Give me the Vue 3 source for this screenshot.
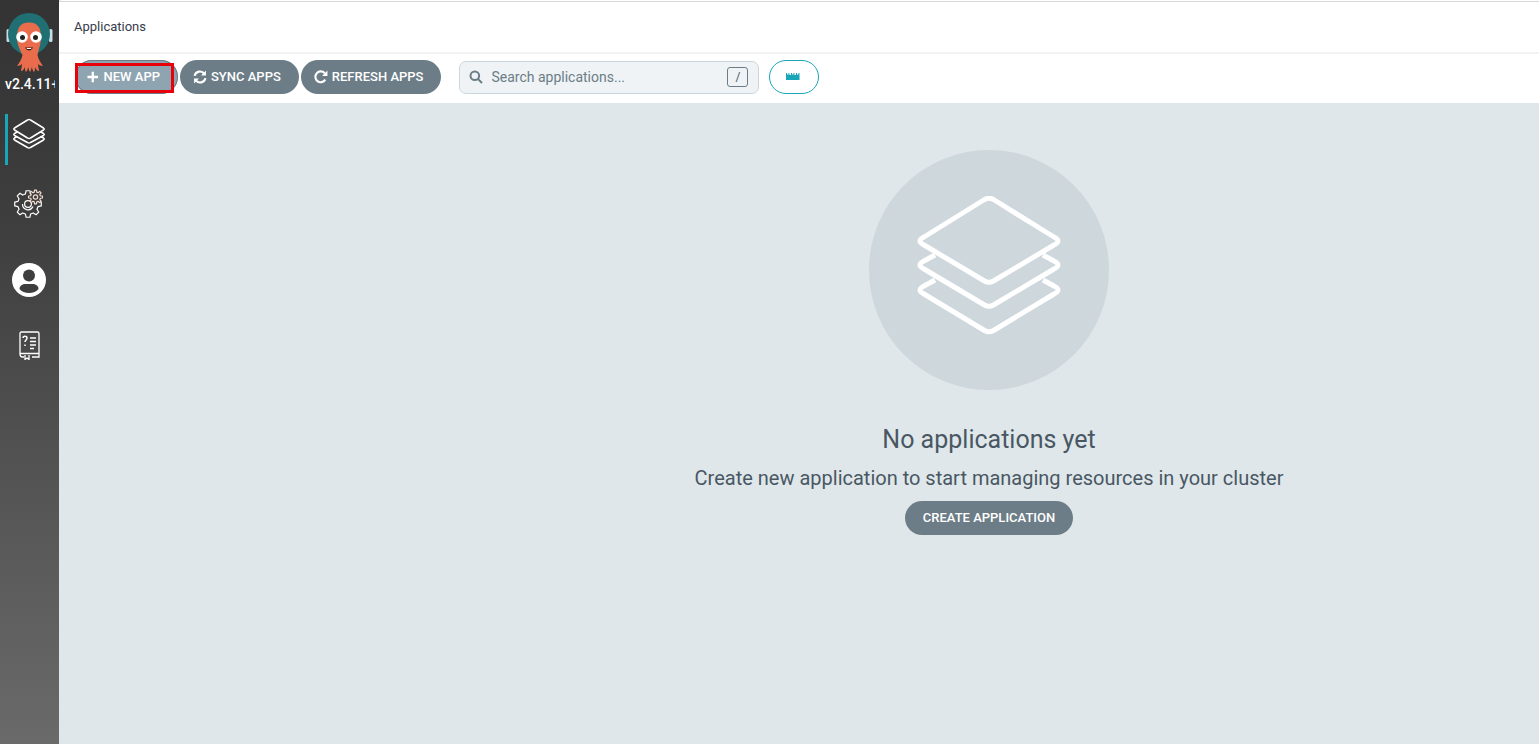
<template>
  <div class="page">
    <aside class="sidebar">
      <div class="logo">
        <svg width="50" height="62" viewBox="0 0 50 62">
          <rect x="2.500" y="18" width="3.500" height="13" rx="1.500" fill="#c9dbe4" />
          <rect x="45" y="18" width="3.500" height="13" rx="1.500" fill="#c9dbe4" />
          <circle cx="25" cy="23" r="21" fill="#1f6f73" />
          <path d="M13 26C13 16 17 11.500 25 11.500S37 16 37 26c0 7-2 11-3.500 18 1 5 3.500 8 5.500 11-2 0-4-1-5-2 0 3 1 5 1 7-2 0-3-2-4-4 0 2 0 4-1 5-1-1-2-3-2-5-1 2-1 4-2 5-1-1-1-3-2-5 0 2-1 4-2 5-1-1-1-3-1-5-1 2-2 4-4 4 0-2 1-4 1-7-1 1-3 2-5 2 2-3 4.500-6 5.500-11C15 37 13 33 13 26z" fill="#e96d4c" />
          <circle cx="18" cy="26" r="5.800" fill="#fff" />
          <circle cx="32" cy="26" r="5.800" fill="#fff" />
          <circle cx="18.500" cy="26.500" r="2.500" fill="#222" />
          <circle cx="31.500" cy="26.500" r="2.500" fill="#222" />
          <path d="M21 36.500c2 4 6 4 8 0z" fill="#3a1c14" />
          <path d="M22.500 37h5l-.5 1h-4z" fill="#fff" />
        </svg>
        <div class="version">v2.4.11+</div>
      </div>
      <nav class="nav">
        <a class="nav-item active">
          <svg width="34" height="32" viewBox="0 0 34 32" fill="none" stroke="#fff" stroke-width="1.500" stroke-linejoin="round">
            <path d="M15.500 2Q17 1 18.500 2L31.500 10Q33 11 31.500 12L18.500 20Q17 21 15.500 20L2.500 12Q1 11 2.500 10z" />
            <path d="M5.500 13.800 2.500 15.500Q1 16.500 2.500 17.500L15.500 24.500Q17 25.500 18.500 24.500L31.500 17.500Q33 16.500 31.500 15.500L28.500 13.800" />
            <path d="M5.500 18.300 2.500 20Q1 21 2.500 22L15.500 29.500Q17 30.500 18.500 29.500L31.500 22Q33 21 31.500 20L28.500 18.300" />
          </svg>
        </a>
        <a class="nav-item">
          <svg width="30" height="30" viewBox="0 0 30 30" fill="none" stroke="#fff" stroke-width="1.200" stroke-linejoin="round">
            <path :d="gearBig" />
            <circle cx="14" cy="15" r="3.400" />
            <path d="M8.500 15A5.500 5.500 0 0 0 19 17.500" />
            <path :d="gearSmall" stroke="#f3dccf" fill="#3e3e3e" />
            <circle cx="21.500" cy="8" r="2.200" stroke="#f3dccf" />
          </svg>
        </a>
        <a class="nav-item">
          <svg width="34" height="34" viewBox="0 0 34 34">
            <circle cx="17" cy="17" r="17" fill="#fff" />
            <circle cx="17" cy="12.500" r="6" fill="#3e3e3e" />
            <path d="M7.500 26c0-3.500 3-5 6-5h7c3 0 6 1.500 6 5-2 2.500-5.500 4-9.500 4s-7.500-1.500-9.500-4z" fill="#3e3e3e" />
          </svg>
        </a>
        <a class="nav-item">
          <svg width="24" height="30" viewBox="0 0 24 30" fill="none" stroke="#fff" stroke-width="1.300">
            <path d="M3 24V3.500Q3 2 4.500 2h16Q22 2 22 3.500V27h-7" />
            <path d="M3 24Q3 27 5.500 27H7M3 23.500h19" />
            <path d="M8 25v4.500l2-1.500 2 1.500V25" />
            <path d="M13 8h6M13 11.500h6M13 15h6M13 18.500h4" />
            <path d="M6 8c0-2.500 4-2.500 4 0 0 2-2 2-2 4M8 14.500v1.500" stroke-width="1.500" />
          </svg>
        </a>
      </nav>
    </aside>

    <main class="main">
      <header class="top-bar">Applications</header>
      <div class="toolbar">
        <div class="actions">
          <div class="new-app-wrap">
            <button class="btn btn-new">
              <svg width="12" height="12" viewBox="0 0 12 12"><path d="M6 .5v11M.5 6h11" stroke="#fff" stroke-width="2.400" /></svg>
              NEW APP
            </button>
            <span class="callout"></span>
          </div>
          <button class="btn">
            <svg width="14" height="14" viewBox="0 0 13 13" fill="none" stroke="#fff" stroke-width="2">
              <path d="M1.500 5.500A5 5 0 0 1 10.500 3.500" />
              <path d="M11.500 7.500A5 5 0 0 1 2.500 9.500" />
              <path d="M12 .5v4.500H7.500z" fill="#fff" stroke="none" />
              <path d="M1 12.500V8h4.500z" fill="#fff" stroke="none" />
            </svg>
            SYNC APPS
          </button>
          <button class="btn">
            <svg width="14" height="14" viewBox="0 0 13 13" fill="none" stroke="#fff" stroke-width="2">
              <path d="M10.500 9A5 5 0 1 1 10 3" />
              <path d="M12.500 .5V5.500H7.500z" fill="#fff" stroke="none" />
            </svg>
            REFRESH APPS
          </button>
        </div>
        <div class="search">
          <svg width="14" height="14" viewBox="0 0 14 14" fill="none" stroke="#6c7d87" stroke-width="2">
            <circle cx="5.800" cy="5.800" r="4.300" />
            <path d="M9 9l4 4" />
          </svg>
          <span class="placeholder">Search applications...</span>
          <span class="key">/</span>
        </div>
        <button class="view-btn">
          <svg width="16" height="7" viewBox="0 0 16 7">
            <path d="M0 0h1v1.500h1.500V0h1v2h1.500V0h1v1.500h1.500V0h1v2h1.500V0h1v1.500h1.500V0h1v7H0z" fill="#18a6b8" />
          </svg>
        </button>
      </div>

      <section class="content">
        <div class="empty-circle">
          <svg width="148" height="148" viewBox="0 -1 148 148" fill="none" stroke="#fff" stroke-width="5" stroke-linejoin="round">
            <path d="M69.500 2.500Q74 0 78.500 2.500L139 40Q147 44 139 48L78.500 84Q74 86.500 69.500 84L9 48Q1 44 9 40z" />
            <path d="M20 58 9 64Q1 68 9 72L69.500 108Q74 110.500 78.500 108L139 72Q147 68 139 64L128 58" />
            <path d="M20 83 9 89Q1 93 9 97L69.500 133.500Q74 136 78.500 133.500L139 97Q147 93 139 89L128 83" />
          </svg>
        </div>
        <h2 class="empty-title">No applications yet</h2>
        <p class="empty-text">Create new application to start managing resources in your cluster</p>
        <button class="btn btn-create">CREATE APPLICATION</button>
      </section>
    </main>
  </div>
</template>

<script setup>
function gear(cx, cy, outer, inner, teeth) {
  const step = (Math.PI * 2) / teeth
  let d = ''
  for (let i = 0; i < teeth; i++) {
    const a = i * step
    const pts = [
      [inner, a - step * 0.32],
      [outer, a - step * 0.18],
      [outer, a + step * 0.18],
      [inner, a + step * 0.32],
    ]
    for (const [r, t] of pts) {
      const x = (cx + r * Math.cos(t)).toFixed(2)
      const y = (cy + r * Math.sin(t)).toFixed(2)
      d += (d ? 'L' : 'M') + x + ' ' + y
    }
  }
  return d + 'z'
}

const gearBig = gear(14, 15, 13.4, 10.4, 8)
const gearSmall = gear(21.5, 8, 7, 5, 8)
</script>

<style scoped>
.page {
  display: flex;
  height: 744px;
  overflow: hidden;
  font-family: Roboto, "Liberation Sans", sans-serif;
}
.sidebar {
  width: 59px;
  flex: none;
  background: linear-gradient(180deg, #333 0%, #3e3e3e 30%, #6a6a6a 100%);
  box-shadow: 1px 0 2px rgba(0, 0, 0, 0.25);
  overflow: hidden;
}
.logo {
  padding: 11px 0 0 4px;
  height: 103px;
  box-sizing: border-box;
}
.logo svg {
  display: block;
}
.version {
  width: 50px;
  padding-left: 1px;
  color: #fff;
  font-size: 14px;
  font-weight: 500;
  line-height: 18px;
  margin-top: 2px;
  white-space: nowrap;
  overflow: hidden;
}
.nav {
  display: flex;
  flex-direction: column;
  padding-top: 11px;
}
.nav-item {
  height: 40px;
  display: flex;
  align-items: center;
  justify-content: center;
  border-left: 3px solid transparent;
  margin-left: 5px;
  margin-right: 10px;
}
.nav-item.active {
  height: 51px;
  box-sizing: border-box;
  padding-bottom: 12px;
  border-left-color: #18a6b8;
}
.nav-item:nth-child(2) {
  margin-top: 19px;
}
.nav-item:nth-child(3) {
  margin-top: 36px;
}
.nav-item:nth-child(4) {
  margin-top: 25px;
}
.main {
  flex: 1;
  min-width: 0;
  display: flex;
  flex-direction: column;
  background: #fff;
  border-top: 1px solid #d8d8d8;
  margin-top: 1px;
}
.top-bar {
  height: 52px;
  flex: none;
  box-sizing: border-box;
  padding: 0 0 2px 15px;
  display: flex;
  align-items: center;
  font-size: 13px;
  color: #363c4a;
  border-bottom: 2px solid #f1f3f4;
}
.toolbar {
  height: 49px;
  flex: none;
  box-sizing: border-box;
  display: flex;
  align-items: center;
  padding: 0 0 3px 16px;
  box-shadow: 0 1px 1px rgba(0, 0, 0, 0.05);
}
.actions {
  display: flex;
  gap: 2px;
}
.btn {
  height: 34px;
  padding: 0 18px 1px 13px;
  border: 0;
  border-radius: 17px;
  background: #6c7d87;
  color: #fff;
  font-family: inherit;
  font-size: 13px;
  font-weight: 500;
  display: inline-flex;
  align-items: center;
  gap: 4px;
  white-space: nowrap;
}
.new-app-wrap {
  position: relative;
}
.btn-new {
  background: #8fa4b1;
  box-shadow: inset 0 0 0 1px #6c7d87;
  width: 103px;
  padding-left: 12px;
  gap: 5px;
}
.callout {
  position: absolute;
  left: 0;
  top: 3px;
  width: 99px;
  height: 30px;
  box-sizing: border-box;
  border: 3px solid #e8000b;
}
.search {
  width: 300px;
  height: 33px;
  box-sizing: border-box;
  margin-left: 18px;
  padding: 0 10px 1px 9px;
  display: flex;
  align-items: center;
  gap: 8px;
  background: #eff3f5;
  border: 1px solid #ccd6dc;
  border-radius: 7px;
}
.placeholder {
  flex: 1;
  font-size: 14px;
  color: #6c7d87;
}
.key {
  width: 21px;
  height: 20px;
  box-sizing: border-box;
  border: 1px solid #6c7d87;
  border-radius: 3px;
  font-size: 12px;
  color: #495763;
  display: flex;
  align-items: center;
  justify-content: center;
}
.view-btn {
  width: 50px;
  height: 34px;
  margin-left: 10px;
  border: 1px solid #18a6b8;
  border-radius: 17px;
  background: #fff;
  display: flex;
  align-items: center;
  justify-content: center;
  padding: 0 0 2px;
}
.content {
  flex: 1;
  background: #dfe7ea;
  display: flex;
  flex-direction: column;
  align-items: center;
  padding: 47px 0 0 380px;
}
.empty-circle {
  width: 240px;
  height: 240px;
  border-radius: 50%;
  background: #cdd7dc;
  display: flex;
  align-items: center;
  justify-content: center;
  flex: none;
}
.empty-title {
  margin: 35px 0 0;
  font-size: 25px;
  font-weight: 400;
  line-height: 30px;
  color: #495763;
}
.empty-text {
  margin: 8px 0 0;
  font-size: 20px;
  line-height: 30px;
  color: #495763;
}
.btn-create {
  margin-top: 8px;
  padding: 0 18px 1px;
}
</style>
